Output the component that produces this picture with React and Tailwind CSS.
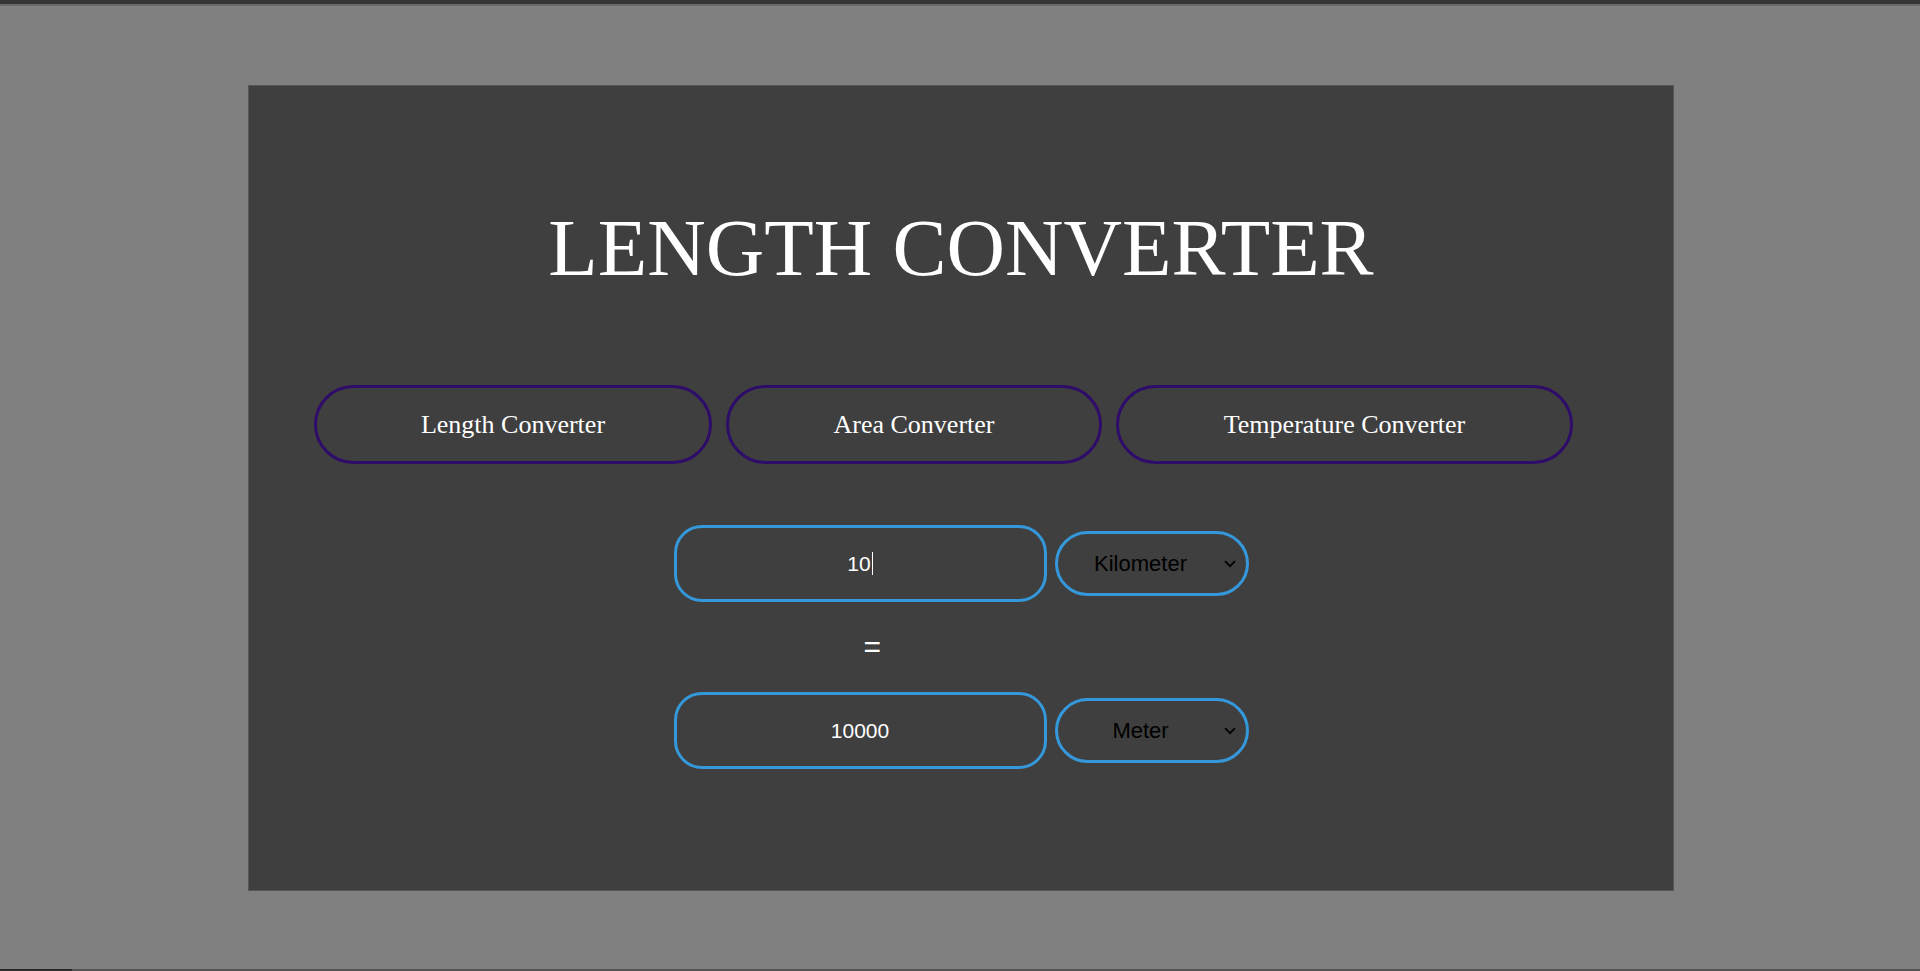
import React from "react";

function Chevron() {
  return (
    <svg
      className="absolute right-[10px] top-1/2 -translate-y-1/2"
      width="12"
      height="8"
      viewBox="0 0 12 8"
      fill="none"
    >
      <path d="M1 1.2 L6 6.2 L11 1.2" stroke="#000" strokeWidth="1.8" />
    </svg>
  );
}

function UnitSelect({ label }) {
  return (
    <div className="relative flex h-[65px] w-[194px] items-center justify-center rounded-full border-[3px] border-[#3498db] pr-[22px] text-[22px] text-black [font-family:'Liberation_Sans',Arial,sans-serif]">
      {label}
      <Chevron />
    </div>
  );
}

function ValueBox({ value, caret }) {
  return (
    <div className="flex h-[77px] w-[373px] items-center justify-center rounded-[28px] border-[3px] border-[#3498db] text-[21px] text-white [font-family:'Liberation_Sans',Arial,sans-serif]">
      <span>{value}</span>
      {caret && <span className="ml-px inline-block h-[23px] w-px bg-white" />}
    </div>
  );
}

export default function App() {
  return (
    <div className="flex h-[971px] w-full flex-col overflow-hidden bg-[#808080]">
      <div className="h-[4px] w-full bg-[#363636]" />
      <div className="h-[2px] w-full bg-[#6a6a6a]" />
      <div className="ml-[248px] mt-[79px] flex h-[806px] w-[1426px] flex-col border border-[#565656] bg-[#3f3f3f]">
        <h1 className="mt-[122px] text-center text-[81px] leading-none font-normal text-white [font-family:'Liberation_Serif','Times_New_Roman',serif]">
          LENGTH CONVERTER
        </h1>
        <div className="mt-[96px] flex gap-[14px] pl-[65px] [font-family:'Liberation_Serif','Times_New_Roman',serif] text-[26px] text-white">
          <button className="flex h-[79px] w-[398px] items-center justify-center rounded-full border-[3px] border-[#2e0c69]">
            Length Converter
          </button>
          <button className="flex h-[79px] w-[376px] items-center justify-center rounded-full border-[3px] border-[#2e0c69]">
            Area Converter
          </button>
          <button className="flex h-[79px] w-[457px] items-center justify-center rounded-full border-[3px] border-[#2e0c69]">
            Temperature Converter
          </button>
        </div>
        <div className="mt-[61px] flex items-center justify-center gap-[8px]">
          <ValueBox value="10" caret />
          <UnitSelect label="Kilometer" />
        </div>
        <div className="mx-auto mt-[27px] w-[575px] pl-[190px] text-[30px] leading-[36px] text-white [font-family:'Liberation_Sans',Arial,sans-serif]">
          =
        </div>
        <div className="mt-[27px] flex items-center justify-center gap-[8px]">
          <ValueBox value="10000" />
          <UnitSelect label="Meter" />
        </div>
      </div>
      <div className="mt-auto flex h-[2px] w-full">
        <div className="h-full w-[72px] bg-[#2a2a2a]" />
        <div className="h-full flex-1 bg-[#555555]" />
      </div>
    </div>
  );
}
